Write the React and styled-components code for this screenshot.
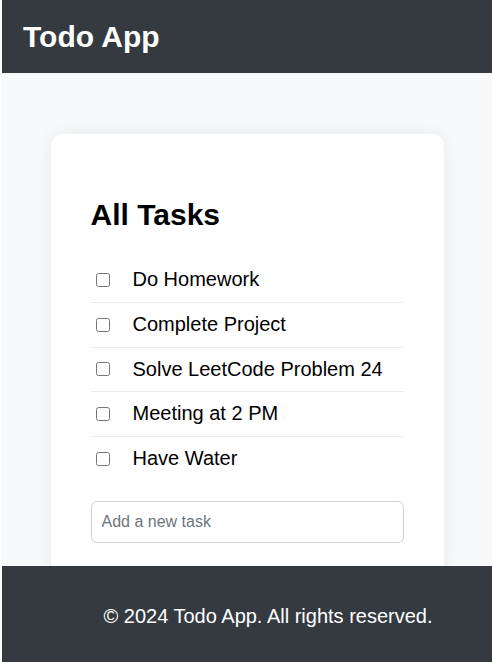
import React, { useState } from 'react';
import styled, { createGlobalStyle } from 'styled-components';

const GlobalStyle = createGlobalStyle`
  html, body {
    margin: 0;
    background: #ffffff;
  }
  body {
    padding-left: 2px;
    font-family: "Liberation Sans", Arial, sans-serif;
    color: #000;
  }
`;

const initialTasks = [
  { id: 1, title: 'Do Homework', done: false },
  { id: 2, title: 'Complete Project', done: false },
  { id: 3, title: 'Solve LeetCode Problem 24', done: false },
  { id: 4, title: 'Meeting at 2 PM', done: false },
  { id: 5, title: 'Have Water', done: false },
];

export default function App() {
  const [tasks, setTasks] = useState(initialTasks);
  const [draft, setDraft] = useState('');

  const toggle = (id) =>
    setTasks(tasks.map((t) => (t.id === id ? { ...t, done: !t.done } : t)));

  const addTask = (e) => {
    if (e.key !== 'Enter' || !draft.trim()) return;
    setTasks([...tasks, { id: Date.now(), title: draft.trim(), done: false }]);
    setDraft('');
  };

  return (
    <>
      <GlobalStyle />
      <Header>
        <Title>Todo App</Title>
      </Header>

      <Main>
        <Card>
          <Heading>All Tasks</Heading>
          <List>
            {tasks.map((task) => (
              <Row key={task.id}>
                <Check type="checkbox" checked={task.done} onChange={() => toggle(task.id)} />
                <Label $done={task.done}>{task.title}</Label>
              </Row>
            ))}
          </List>
          <NewTask
            placeholder="Add a new task"
            value={draft}
            onChange={(e) => setDraft(e.target.value)}
            onKeyDown={addTask}
          />
        </Card>
      </Main>

      <Footer>© 2024 Todo App. All rights reserved.</Footer>
    </>
  );
}

const Header = styled.header`
  display: flex;
  align-items: center;
  height: 73px;
  padding: 0 21px;
  background: #343a40;
`;

const Title = styled.h1`
  margin: 0;
  color: #fff;
  font-size: 30px;
  font-weight: 700;
`;

const Main = styled.main`
  background: #f8f9fa;
  padding: 61px 0 120px;
`;

const Card = styled.section`
  box-sizing: border-box;
  width: 393px;
  margin: 0 auto;
  padding: 40px;
  background: #fff;
  border-radius: 12px;
  box-shadow: 0 0 18px rgba(0, 0, 0, 0.07);
`;

const Heading = styled.h2`
  margin: 24px 0 26px;
  font-size: 30px;
  line-height: 34px;
  font-weight: 700;
`;

const List = styled.ul`
  list-style: none;
  margin: 0 0 20px;
  padding: 0;
`;

const Row = styled.li`
  display: flex;
  align-items: center;
  padding: 10px 0;
  line-height: 23.75px;
  font-size: 20px;
  border-bottom: 1px solid #e9ecef;

  &:last-child {
    border-bottom: none;
  }
`;

const Check = styled.input`
  width: 14px;
  height: 14px;
  margin: 0 23px 0 5px;
`;

const Label = styled.span`
  text-decoration: ${(p) => (p.$done ? 'line-through' : 'none')};
  color: ${(p) => (p.$done ? '#6c757d' : '#000')};
`;

const NewTask = styled.input`
  box-sizing: border-box;
  width: 100%;
  height: 42px;
  padding: 0 10px;
  border: 1px solid #ced4da;
  border-radius: 6px;
  font-family: inherit;
  font-size: 16px;
  outline: none;

  &::placeholder {
    color: #6c757d;
  }
`;

const Footer = styled.footer`
  position: fixed;
  left: 2px;
  bottom: 0;
  width: 100%;
  padding: 38px 20px 34px;
  line-height: 24px;
  background: #343a40;
  color: #fff;
  font-size: 20px;
  text-align: center;
`;
